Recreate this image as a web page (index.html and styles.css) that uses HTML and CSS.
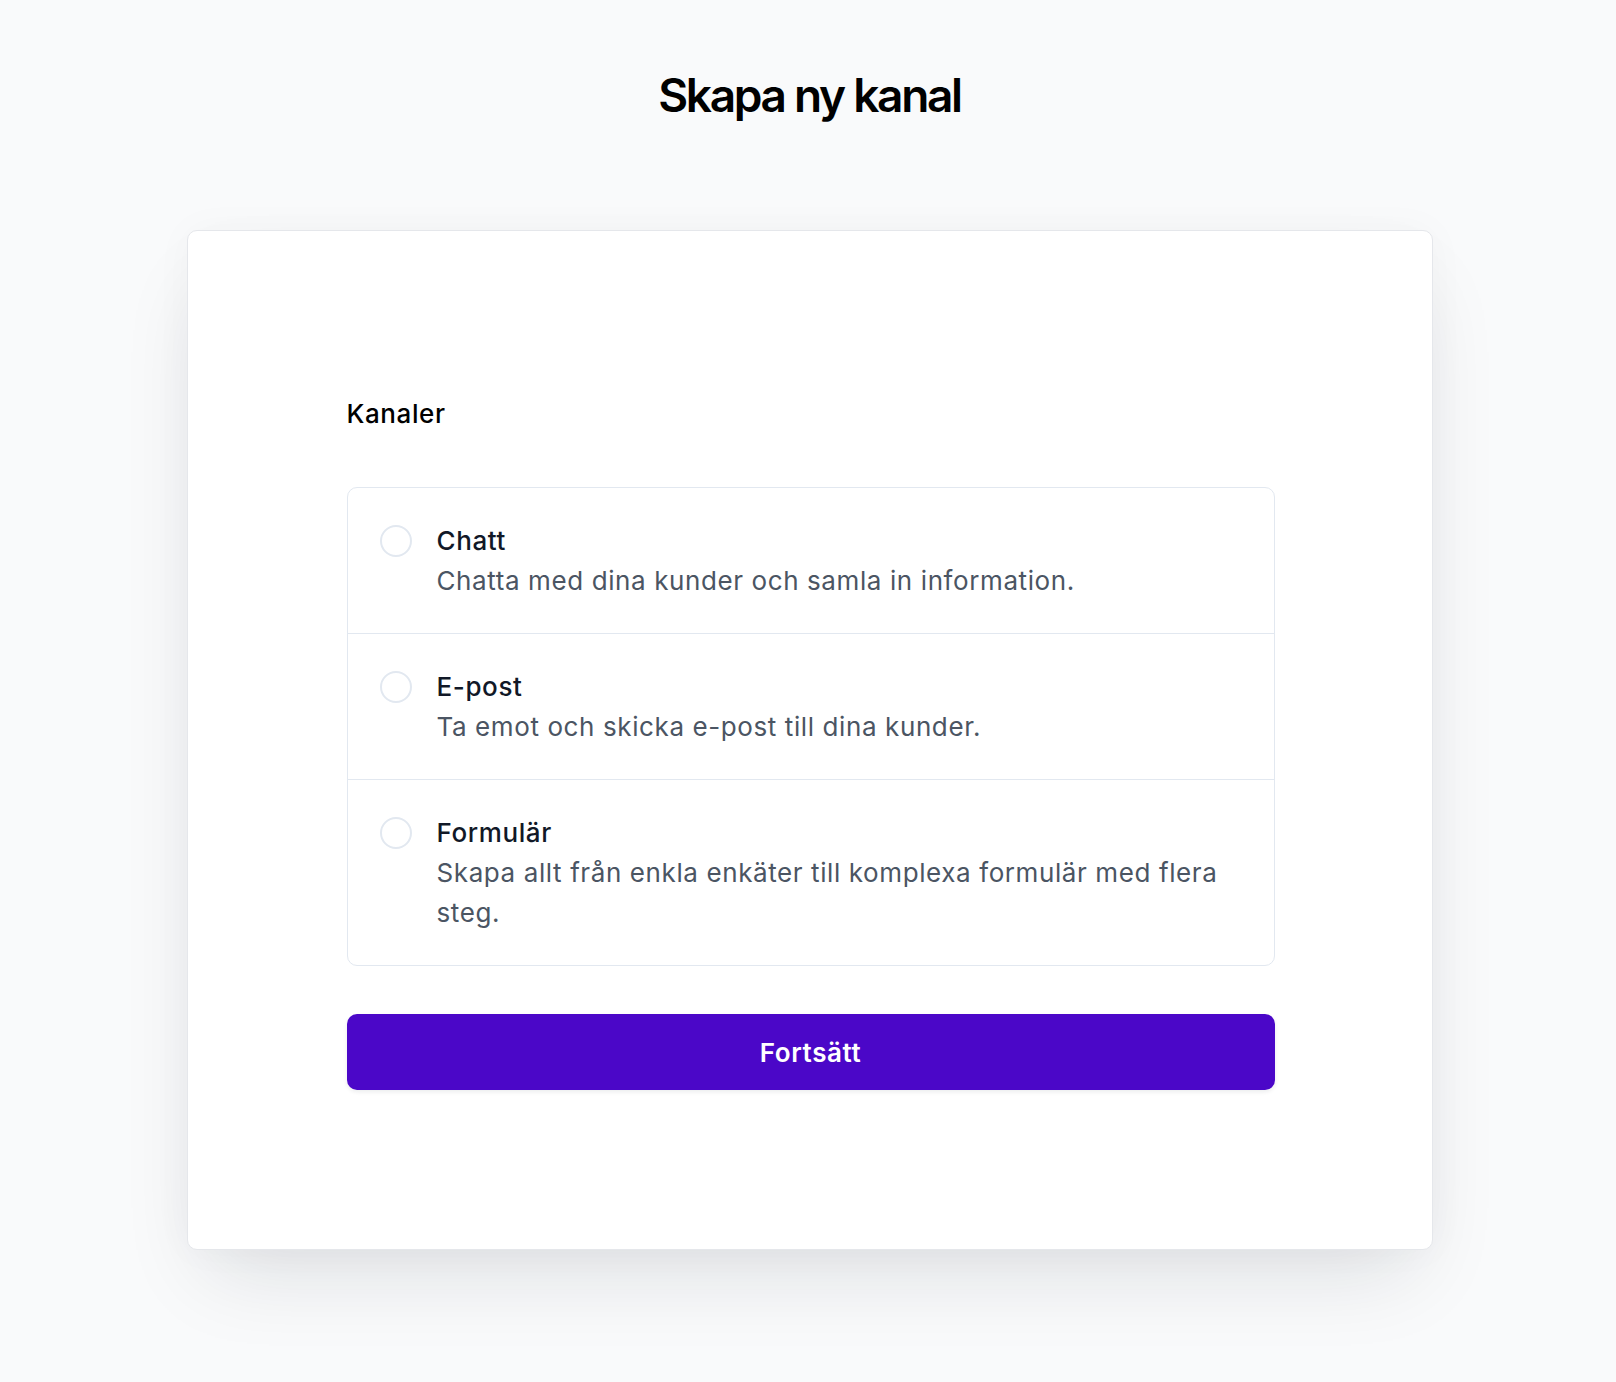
FILE: index.html
```html
<!DOCTYPE html>
<html lang="sv">

<head>
    <meta charset="UTF-8">
    <meta name="viewport" content="width=device-width, initial-scale=1.0">
    <title>Skapa ny kanal</title>
    <link rel="stylesheet" href="styles.css">
</head>

<body>
    <h1 class="page-title">Skapa ny kanal</h1>

    <div class="card">
        <form class="channel-form">
            <p class="field-label">Kanaler</p>

            <div class="option-list">
                <label class="option">
                    <input type="radio" name="channel" value="chat" class="option-radio">
                    <span class="option-text">
                        <span class="option-name">Chatt</span>
                        <span class="option-desc">Chatta med dina kunder och samla in information.</span>
                    </span>
                </label>
                <label class="option">
                    <input type="radio" name="channel" value="email" class="option-radio">
                    <span class="option-text">
                        <span class="option-name">E-post</span>
                        <span class="option-desc">Ta emot och skicka e-post till dina kunder.</span>
                    </span>
                </label>
                <label class="option">
                    <input type="radio" name="channel" value="form" class="option-radio">
                    <span class="option-text">
                        <span class="option-name">Formulär</span>
                        <span class="option-desc">Skapa allt från enkla enkäter till komplexa formulär med flera steg.</span>
                    </span>
                </label>
            </div>

            <button type="button" class="submit-button">Fortsätt</button>
        </form>
    </div>
</body>

</html>
```

FILE: styles.css
```css
body {
    font-family: Inter, "Noto Sans", Arial, sans-serif;
    margin: 0;
    padding: 66px 0 120px 3px;
    background-color: #f9fafb;
    color: #111827;
}

.page-title {
    margin: 0 0 106px;
    text-align: center;
    font-size: 46px;
    line-height: 58px;
    font-weight: 600;
    letter-spacing: -0.05em;
    color: #000;
}

.card {
    box-sizing: border-box;
    width: 1246px;
    margin: 0 auto;
    padding: 163px 157px 159px 159px;
    background-color: white;
    border: 1px solid #e5e7eb;
    border-radius: 10px;
    box-shadow: 0 40px 80px -20px rgba(17, 24, 39, 0.12), 0 0 40px rgba(17, 24, 39, 0.03);
}

.field-label {
    margin: 0 0 53px;
    font-size: 26px;
    line-height: 40px;
    font-weight: 500;
    letter-spacing: 0.6px;
    color: #000;
}

.option-list {
    border: 1px solid #e2e8f0;
    border-radius: 10px;
}

.option {
    display: flex;
    align-items: flex-start;
    padding: 33px 32px 32px;
    cursor: pointer;
}

    .option + .option {
        border-top: 1px solid #e2e8f0;
    }

.option-radio {
    appearance: none;
    -webkit-appearance: none;
    box-sizing: border-box;
    flex: none;
    width: 32px;
    height: 32px;
    margin: 4px 25px 0 0;
    border: 2px solid #e2e8f0;
    border-radius: 50%;
    background-color: white;
}

    .option-radio:checked {
        border: 9px solid #4b07c8;
    }

.option-text {
    display: flex;
    flex-direction: column;
    font-size: 26px;
    line-height: 40px;
    letter-spacing: 0.6px;
}

.option-name {
    font-weight: 500;
    color: #111827;
}

.option-desc {
    color: #4b5563;
}

.submit-button {
    display: block;
    width: 100%;
    height: 76px;
    margin-top: 48px;
    border: none;
    border-radius: 10px;
    background-color: #4b07c8;
    color: white;
    font-family: inherit;
    font-size: 26px;
    font-weight: 600;
    letter-spacing: 0.6px;
    cursor: pointer;
    box-shadow: 0 2px 4px rgba(17, 24, 39, 0.08);
}

    .submit-button:hover {
        background-color: #4206b3;
    }
```
